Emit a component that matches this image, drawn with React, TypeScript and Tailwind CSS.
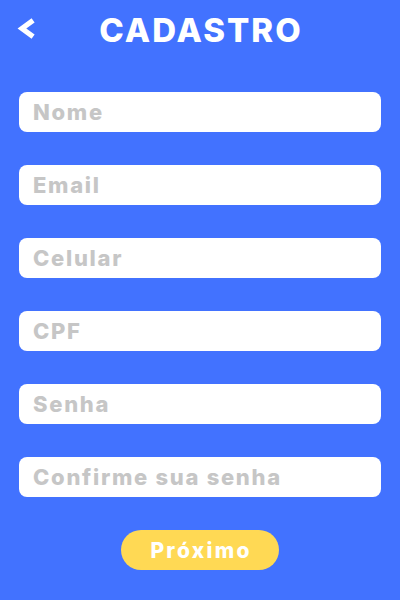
import React from "react";

const fields = ["Nome", "Email", "Celular", "CPF", "Senha", "Confirme sua senha"];

export default function App() {
  return (
    <div
      className="w-[400px] h-[600px] bg-[#4272ff] flex flex-col overflow-hidden"
      style={{ fontFamily: "Inter, 'Noto Sans', sans-serif" }}
    >
      <div className="relative h-[60px] flex items-center justify-center">
        <button className="absolute left-[14px] top-[16px] w-[24px] h-[24px]">
          <svg width="24" height="24" viewBox="0 0 24 24">
            <polyline
              points="17,6 8,12.5 17,19"
              fill="none"
              stroke="#ffffff"
              strokeWidth="5.2"
              strokeLinecap="square"
              strokeLinejoin="miter"
            />
          </svg>
        </button>
        <h1 className="text-[33px] font-extrabold text-white leading-none tracking-[2px] pl-[2px]">CADASTRO</h1>
      </div>
      <div className="flex flex-col gap-[33px] px-[19px] mt-[32px]">
        {fields.map((f) => (
          <input
            key={f}
            placeholder={f}
            className="h-[40px] w-full rounded-[8px] bg-white px-[14px] text-[22px] font-extrabold tracking-[1.7px] text-[#444] placeholder:text-[#c6c6c6] outline-none"
            style={{ fontFamily: "Inter, 'Noto Sans', sans-serif" }}
          />
        ))}
      </div>
      <button className="mt-[33px] self-center w-[158px] h-[40px] rounded-full bg-[#ffd954] text-white text-[21px] font-extrabold tracking-[2.3px] pl-[2.3px] leading-none">
        Próximo
      </button>
    </div>
  );
}
